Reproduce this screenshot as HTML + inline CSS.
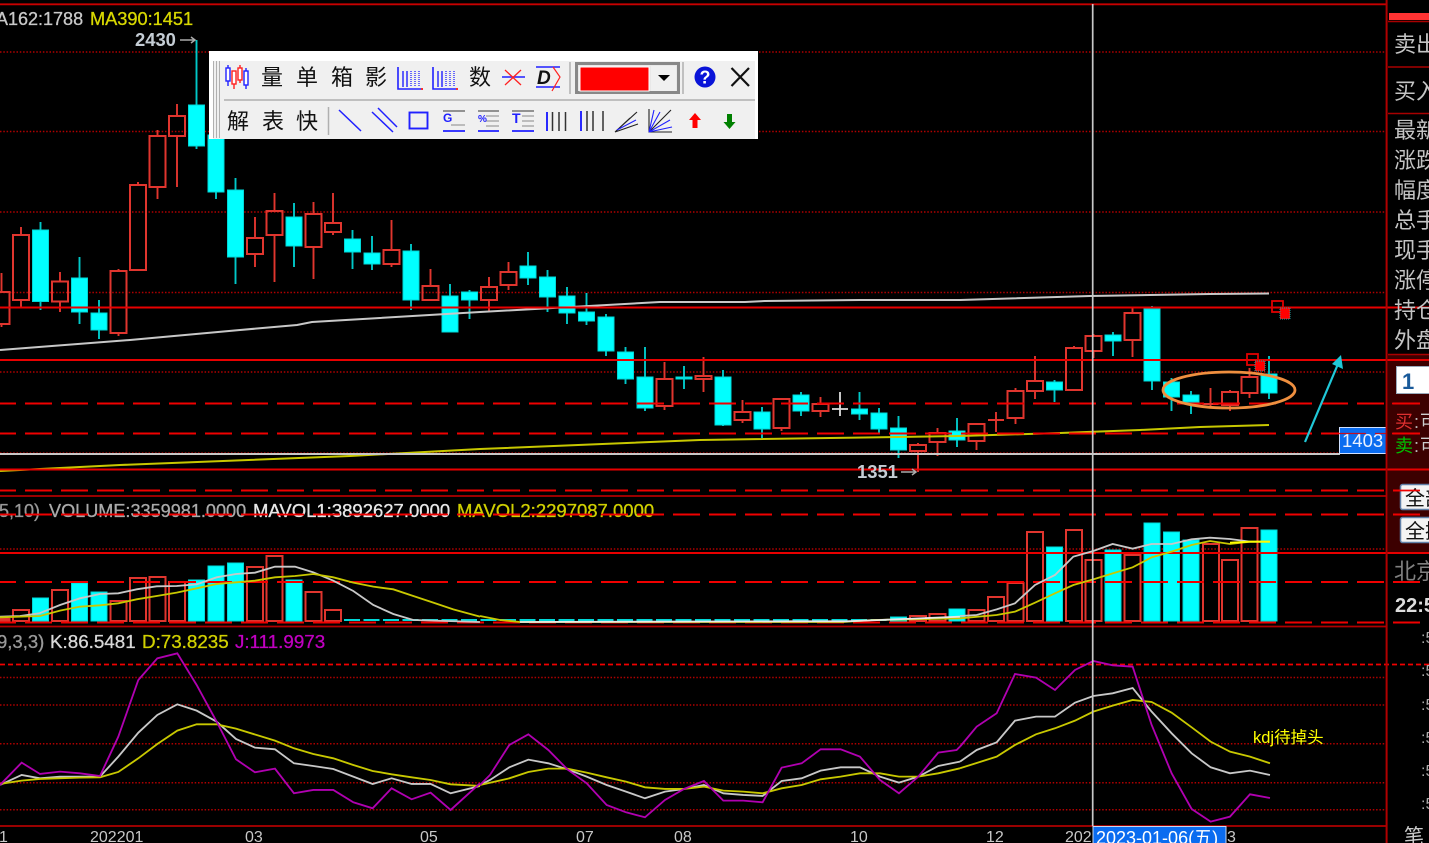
<!DOCTYPE html>
<html><head><meta charset="utf-8"><style>
html,body{margin:0;padding:0;background:#000;width:1429px;height:843px;overflow:hidden}
svg{display:block}
text{font-family:"Liberation Sans","WenQuanYi Zen Hei","Noto Sans CJK SC",sans-serif}
.c{font-family:"WenQuanYi Zen Hei","Noto Sans CJK SC",sans-serif}
.t{stroke-width:.3px;paint-order:stroke}
</style></head><body>
<svg width="1429" height="843" viewBox="0 0 1429 843" xmlns="http://www.w3.org/2000/svg">
<rect width="1429" height="843" fill="#000"/>
<rect x="1388" y="355" width="41" height="198" fill="#3c0000"/>

<!-- dotted grid -->
<g stroke="#b00000" stroke-width="1.500" stroke-dasharray="1.500 1.800" fill="none">
<path d="M0 52H1385M0 131.500H1385M0 212H1385M0 292.500H1385M0 372H1385M0 453H1385M0 549H1385M0 677.500H1385M0 705H1385M0 743.700H1385M0 782.700H1385M0 809.700H1385"/>
</g>

<!-- candle wicks -->
<path fill="none" stroke="#e0352e" stroke-width="1.900" d="M1.500 273V292M1.500 324V327M21 227V235M21 300V307M60 272V281.500M60 301.500V312M118.500 269V271M118.500 333V336M138 182V185M157.500 130V136M157.500 187V199M177 104V116M177 136V187M255 217V238M255 254V267M274.500 193V211M274.500 235V282M313.500 202V214M313.500 247V279M333 193V223M333 232V235M391.500 220V250M391.500 264V267M430.500 269V286M489 277V287M489 300V312M508.500 262V272M508.500 285V290M664.500 362V379M664.500 406V410M703.500 357V376M703.500 379V392M742.500 400V412M742.500 420V423M781.500 398V399M781.500 428V431M820.500 397V404M820.500 411V417M918 443V445M918 451V472M937.500 428V433M937.500 442V456M976.500 423V424M976.500 441V450M996 412V432M1015.500 388V391M1015.500 418V424M1035 356V381M1035 391V399M1074 346V348M1074 390V391M1093.500 334V336M1093.500 351V358M1132.500 308V313M1132.500 340V357M1210.500 388V408M1230 390V392M1230 405V411M1249.500 368V377M1249.500 393V398"/>
<path fill="none" stroke="#00c8c8" stroke-width="1.900" d="M40.500 222V310M79.500 257V324M99 300V339M196.500 40V149M216 130V199M235.500 178V284M294 203V267M352.500 230V269M372 236V270M411 244V310M450 284V332M469.500 290V319M528 252V285M547.500 270V312M567 287V324M586.500 293V325M606 314V356M625.500 347V384M645 347V411M684 366V389M723 370V426M762 407V438M801 392V416M859.500 392V420M879 408V433M898.500 416V458M957 418V447M1054.500 380V402M1113 332V356M1152 306V390M1171.500 378V411M1191 391V414M1269 356V399"/>
<!-- cyan bodies -->
<path fill="#00ffff" stroke="#00d8d8" stroke-width="1" d="M32.500 230h16v71.500h-16zM71.500 278h16v34h-16zM91 313h16v17h-16zM188.500 105h16v41h-16zM208 135h16v57h-16zM227.500 190h16v67h-16zM286 217h16v29h-16zM344.500 239h16v13h-16zM364 253h16v11h-16zM403 251h16v49h-16zM442 296h16v36h-16zM461.500 292h16v8h-16zM520 266h16v12h-16zM539.500 277h16v20h-16zM559 296h16v17h-16zM578.500 312h16v9h-16zM598 317h16v34h-16zM617.500 352h16v27h-16zM637 377h16v31h-16zM676 377h16v2h-16zM715 377h16v48h-16zM754 412h16v17h-16zM793 395h16v16h-16zM851.500 409h16v5h-16zM871 413h16v16h-16zM890.500 428h16v22h-16zM949 431h16v9h-16zM1046.500 382h16v8h-16zM1105 335h16v6h-16zM1144 309h16v72h-16zM1163.500 382h16v15h-16zM1183 395h16v7h-16zM1261 374h16v19h-16z"/>
<!-- red bodies -->
<path fill="none" stroke="#e0352e" stroke-width="2" d="M-6.500 292h16v32h-16zM13 235h16v65h-16zM52 281.500h16v20h-16zM110.500 271h16v62h-16zM130 185h16v85h-16zM149.500 136h16v51h-16zM169 116h16v20h-16zM247 238h16v16h-16zM266.500 211h16v24h-16zM305.500 214h16v33h-16zM325 223h16v9h-16zM383.500 250h16v14h-16zM422.500 286h16v14h-16zM481 287h16v13h-16zM500.500 272h16v13h-16zM656.500 379h16v27h-16zM695.500 376h16v3h-16zM734.500 412h16v8h-16zM773.500 399h16v29h-16zM812.500 404h16v7h-16zM910 445h16v6h-16zM929.500 433h16v9h-16zM968.500 424h16v17h-16zM1007.500 391h16v27h-16zM1027 381h16v10h-16zM1066 348h16v42h-16zM1085.500 336h16v15h-16zM1124.500 313h16v27h-16zM1222 392h16v13h-16zM1241.500 377h16v16h-16z"/>
<path fill="none" stroke="#e0352e" stroke-width="2" d="M988 420h16M1202.500 404h16"/>
<path fill="none" stroke="#00e0e0" stroke-width="2" d="M676 378h16"/>
<path fill="none" stroke="#ddd" stroke-width="1.800" d="M840 392V416M832 409H848"/>

<!-- volume bars -->
<path fill="#00ffff" stroke="#00d8d8" stroke-width="1" d="M32.500 598h16v23h-16zM71.500 583h16v38h-16zM91 592h16v29h-16zM188.500 580h16v41h-16zM208 566h16v55h-16zM227.500 563h16v58h-16zM286 580h16v41h-16zM890.500 617h16v4h-16zM949 609h16v12h-16zM1046.500 547h16v74h-16zM1105 550h16v71h-16zM1144 523h16v98h-16zM1163.500 532h16v89h-16zM1183 540h16v81h-16zM1261 530h16v91h-16z"/>
<path fill="none" stroke="#e0352e" stroke-width="2" d="M-6.500 619h16v2h-16zM13 610h16v11h-16zM52 590h16v31h-16zM110.500 601h16v20h-16zM130 578h16v43h-16zM149.500 577h16v44h-16zM169 582h16v39h-16zM247 567h16v54h-16zM266.500 556h16v65h-16zM305.500 592h16v29h-16zM325 610h16v11h-16zM910 616h16v5h-16zM929.500 614h16v7h-16zM968.500 610h16v11h-16zM988 597h16v24h-16zM1007.500 583h16v38h-16zM1027 532h16v89h-16zM1066 530h16v91h-16zM1085.500 560h16v61h-16zM1124.500 555h16v66h-16zM1203 544h16v77h-16zM1222 560h16v61h-16zM1241.500 528h16v93h-16z"/>
<path fill="none" stroke="#00d8d8" stroke-width="2" stroke-dasharray="16 3.500" d="M344 620H905"/>

<!-- price MAs -->
<polyline fill="none" stroke="#c8c8c8" stroke-width="2" points="0,350 130,340 240,330 297,325 312,322 480,312 660,302 745,302 765,301 860,300 960,300 1090,296 1210,294 1269,293.500"/>
<polyline fill="none" stroke="#c8c800" stroke-width="2" points="0,471 120,465 350,456 480,449 700,440 960,436 1060,433 1140,430 1200,427 1269,425"/>

<!-- red structural lines -->
<path fill="none" stroke="#c80000" stroke-width="1.900" d="M0 4.300H1386"/>
<path fill="none" stroke="#e80000" stroke-width="2" d="M0 307.500H1429M0 360H1429M0 469.500H1429M0 553H1429"/>
<path fill="none" stroke="#b00000" stroke-width="1.800" d="M0 496H1386M0 626.500H1386M0 826H1386"/>
<path fill="none" stroke="#f00000" stroke-width="2" stroke-dasharray="27 9" d="M-11 403.500H1420M-11 433.500H1420M-11 490.500H1420M-11 514.500H1420M-11 582H1420M-11 622.500H1420"/>
<path fill="none" stroke="#f00000" stroke-width="1.800" stroke-dasharray="5 3" d="M0 664.500H1429"/>
<path fill="none" stroke="#c8c8c8" stroke-width="2" d="M0 454H1340"/>

<!-- vol MA lines, zoom coordinates -->
<g transform="translate(0,490) scale(.3333)" fill="none" stroke-width="5.500">
<polyline stroke="#c8c8c8" points="0,380 60,378 118,370 180,345 240,325 300,312 355,310 410,298 470,289 530,288 590,283 650,262 708,252 765,248 825,230 885,230 940,247 1000,272 1060,303 1120,345 1180,372 1240,390 1440,396"/>
<polyline stroke="#c8c800" points="0,382 120,378 180,362 240,350 300,346 355,340 410,328 470,318 530,308 590,295 650,282 708,277 765,272 825,262 885,258 940,252 1000,262 1060,278 1120,290 1180,298 1240,318 1300,338 1360,358 1440,380"/>
</g>
<g transform="translate(480,490) scale(.3333)" fill="none" stroke-width="5.500">
<polyline stroke="#c8c800" points="0,378 60,390 120,396 1090,396 1180,390 1440,385"/>
<polyline stroke="#e8e8e8" points="120,396 940,394 1100,394 1200,390 1440,380"/>
</g>
<g transform="translate(960,490) scale(.3333)" fill="none" stroke-width="5.500">
<polyline stroke="#c8c8c8" points="0,378 50,375 110,358 165,340 225,285 285,255 340,200 400,183 458,162 518,176 575,162 635,162 695,148 750,143 810,147 870,155 930,155"/>
<polyline stroke="#c8c800" points="0,385 110,375 165,365 225,338 285,310 340,285 400,268 458,250 518,232 575,202 635,185 695,165 750,153 810,162 870,155 930,155"/>
<polyline stroke="#ffff00" points="810,158 870,155 930,155"/>
</g>

<!-- KDJ lines -->
<g transform="translate(0,490) scale(.3333)" fill="none" stroke-width="5.500">
<polyline stroke="#c8c8c8" points="0,885 65,855 120,865 180,860 240,860 300,860 355,800 415,728 472,675 532,643 590,662 650,695 708,747 765,773 825,778 882,820 940,828 1000,837 1060,860 1118,882 1175,865 1235,882 1292,882 1352,910 1440,888"/>
<polyline stroke="#c8c800" points="0,882 65,872 120,867 240,863 300,862 355,846 415,805 472,762 532,722 590,703 650,703 708,716 825,752 882,775 940,792 1000,805 1060,825 1118,843 1175,853 1235,862 1292,870 1352,883 1440,888"/>
<polyline stroke="#b000b0" points="0,885 65,818 120,852 180,845 240,850 300,858 355,740 415,570 472,505 532,490 590,585 650,695 708,808 765,847 825,836 882,910 940,900 1000,900 1060,937 1118,955 1175,895 1235,928 1292,908 1352,960 1440,880"/>
</g>
<g transform="translate(480,490) scale(.3333)" fill="none" stroke-width="5.500">
<polyline stroke="#c8c8c8" points="0,885 30,870 88,832 145,809 205,820 262,838 320,860 380,885 438,905 495,925 555,905 612,897 672,885 730,910 790,915 848,918 905,873 965,865 1022,842 1082,832 1140,832 1200,860 1257,878 1315,860 1375,828 1440,815"/>
<polyline stroke="#c8c800" points="0,885 88,865 145,846 205,836 262,836 320,848 380,862 438,875 495,892 555,897 612,897 672,890 730,902 790,905 848,910 905,895 965,885 1022,868 1082,860 1140,850 1200,850 1257,860 1315,860 1375,850 1440,835"/>
<polyline stroke="#b000b0" points="0,885 30,855 88,765 145,733 205,780 262,838 320,880 380,945 438,967 495,982 555,930 612,897 672,873 730,932 790,932 848,937 905,833 965,820 1022,778 1082,778 1140,800 1200,870 1257,910 1315,860 1375,788 1430,780 1440,770"/>
</g>
<g transform="translate(960,490) scale(.3333)" fill="none" stroke-width="5.500">
<polyline stroke="#c8c8c8" points="0,815 50,780 110,757 165,692 228,680 285,680 345,638 400,618 458,610 518,594 575,665 635,730 695,790 752,832 810,850 870,842 930,855"/>
<polyline stroke="#c8c800" points="0,835 110,800 165,765 228,733 285,715 345,692 400,665 458,647 518,630 575,636 635,668 695,712 752,755 810,785 870,800 930,820"/>
<polyline stroke="#b000b0" points="0,770 50,710 110,670 165,552 228,563 285,600 345,540 400,513 458,526 518,530 575,705 635,850 695,957 752,995 810,980 870,913 930,924"/>
</g>

<!-- annotations -->
<ellipse cx="1229" cy="390" rx="66" ry="18" fill="none" stroke="#ef8f3f" stroke-width="2.800"/>
<path d="M1305 442L1338 364" stroke="#20c8d8" stroke-width="2.200" fill="none"/>
<path d="M1341 355L1343 369L1332 364Z" fill="#20c8d8"/>
<g fill="none" stroke="#e00000" stroke-width="1.800"><rect x="1272" y="301" width="11" height="11"/><rect x="1247" y="354" width="11" height="11"/></g>
<g fill="#ff0000" stroke="#20a0a0" stroke-width="1" stroke-dasharray="1 1"><rect x="1280" y="308" width="10" height="11"/><rect x="1255" y="361" width="10" height="10"/></g>

<!-- crosshair -->
<path d="M1092.700 4V826" stroke="#c8c8c8" stroke-width="1.700"/>

<!-- text labels -->
<text class="t" x="-4" y="25" font-size="18" fill="#c8c8c8" stroke="#c8c8c8">A162:1788</text>
<text class="t" x="90" y="25" font-size="18.200" fill="#d8d800" stroke="#d8d800">MA390:1451</text>
<text x="135" y="46" font-size="18.400" font-weight="bold" fill="#c4ccd4">2430</text>
<path d="M180 40H195M191 37L195 40L191 43" stroke="#aaa" stroke-width="1.500" fill="none"/>
<text x="857" y="478" font-size="18.400" font-weight="bold" fill="#c4ccd4">1351</text>
<path d="M901 472H916M912 469L916 472L912 475" stroke="#aaa" stroke-width="1.500" fill="none"/>
<text class="t" x="-1" y="517" font-size="18" fill="#999" stroke="#999">5,10)</text>
<text class="t" x="49" y="517" font-size="18.100" fill="#aaa" stroke="#aaa">VOLUME:3359981.0000</text>
<text class="t" x="253" y="517" font-size="18.500" fill="#e8e8e8" stroke="#e8e8e8">MAVOL1:3892627.0000</text>
<text class="t" x="457" y="517" font-size="18.500" fill="#d0d000" stroke="#d0d000">MAVOL2:2297087.0000</text>
<path fill="none" stroke="#f00000" stroke-width="1.800" stroke-dasharray="27 9" d="M-11 514.500H670"/>
<text class="t" x="-3" y="648" font-size="18.500" fill="#999" stroke="#999">9,3,3)</text>
<text class="t" x="50" y="648" font-size="18.800" fill="#d8d8d8" stroke="#d8d8d8">K:86.5481</text>
<text class="t" x="142" y="648" font-size="18.800" fill="#d0d000" stroke="#d0d000">D:73.8235</text>
<text class="t" x="235" y="648" font-size="18.800" fill="#c000c0" stroke="#c000c0">J:111.9973</text>
<text x="1253" y="743" font-size="16.500" fill="#ffff00">kdj待掉头</text>

<g font-size="16" fill="#c8c8c8">
<text x="-1" y="842">1</text><text x="90" y="842">202201</text><text x="245" y="842">03</text><text x="420" y="842">05</text><text x="576" y="842">07</text><text x="674" y="842">08</text><text x="850" y="842">10</text><text x="986" y="842">12</text><text x="1065" y="842">202</text><text x="1227" y="842">3</text>
</g>
<rect x="1093" y="826.500" width="133" height="20" fill="#0a6cf0" stroke="#c8d8f0" stroke-width="1"/>
<text x="1096" y="844" font-size="18" fill="#fff">2023-01-06(五)</text>

<rect x="1339.500" y="427.500" width="47" height="26" fill="#0a6cf0" stroke="#d0e0ff" stroke-width="1"/>
<text x="1342" y="447" font-size="18.500" fill="#e8f0ff">1403</text>
<path d="M1339 433.500H1386" stroke="#e00000" stroke-width="1.300" stroke-dasharray="27 9" opacity=".85"/>

<!-- right panel -->
<path d="M1386.600 0V843" stroke="#b00000" stroke-width="2"/>
<rect x="1389" y="13" width="40" height="7" fill="#ff3333"/>
<path d="M1388 21.500H1429M1388 67H1429M1388 113.500H1429M1388 354.500H1429" stroke="#a80000" stroke-width="1.500"/>
<g class="c" font-size="22" fill="#c4c4c4">
<text class="c" x="1394" y="52">卖出</text><text class="c" x="1394" y="99">买入</text>
<text class="c" x="1394" y="138">最新</text><text class="c" x="1394" y="168">涨跌</text><text class="c" x="1394" y="198">幅度</text><text class="c" x="1394" y="228">总手</text><text class="c" x="1394" y="258">现手</text><text class="c" x="1394" y="288">涨停</text><text class="c" x="1394" y="318">持仓</text><text class="c" x="1394" y="348">外盘</text>
</g>
<rect x="1396.500" y="366.500" width="40" height="27" fill="#fff" stroke="#9ab" stroke-width="1"/>
<text x="1402" y="389" font-size="22" font-weight="bold" fill="#1a5a9a" style="font-family:'Liberation Sans',sans-serif">1</text>
<text class="c" x="1395" y="428" font-size="18" fill="#e03030">买</text>
<text x="1414" y="428" font-size="18" fill="#bbb">:</text><text class="c" x="1420" y="428" font-size="18" fill="#ccc">可</text>
<text class="c" x="1395" y="452" font-size="18" fill="#00c000">卖</text>
<text x="1414" y="452" font-size="18" fill="#bbb">:</text><text class="c" x="1420" y="452" font-size="18" fill="#ccc">可</text>
<path d="M1392 403.500H1420M1392 433.500H1420" stroke="#f00000" stroke-width="1.800"/>
<rect x="1400.500" y="484.500" width="40" height="25" rx="2" fill="#f4f4f4" stroke="#6080a8" stroke-width="1.500"/>
<rect x="1400.500" y="517.500" width="40" height="25" rx="2" fill="#f4f4f4" stroke="#6080a8" stroke-width="1.500"/>
<text class="c" x="1405" y="505" font-size="20" fill="#111">全部</text>
<text class="c" x="1405" y="538" font-size="20" fill="#111">全撤</text>
<path d="M1393 490.500H1420" stroke="#f00000" stroke-width="1.800"/>
<text class="c" x="1394" y="579" font-size="22" fill="#808080">北京</text>
<path d="M1393 582H1420M1393 622.500H1420" stroke="#f00000" stroke-width="1.800"/>
<text x="1395" y="612" font-size="20" font-weight="bold" fill="#ddd">22:5</text>
<g font-size="16" fill="#aaa">
<text x="1421" y="643">:5</text><text x="1421" y="676">:5</text><text x="1421" y="710">:5</text><text x="1421" y="743">:5</text><text x="1421" y="776">:5</text><text x="1421" y="809">:5</text>
</g>
<text class="c" x="1404" y="843" font-size="20" fill="#ccc">笔</text>

<!-- toolbar -->
<rect x="209" y="51" width="549" height="88" fill="#ffffff"/>
<rect x="222" y="61" width="533" height="78" fill="#f0f0f0"/>
<rect x="213" y="61" width="9" height="78" fill="#f0f0f0"/>
<path d="M213.500 61V138M216.500 61V138M219.500 61V138" stroke="#b0b0b0" stroke-width="1"/>
<path d="M224 100H755" stroke="#b8b8b8" stroke-width="1.700"/>
<path d="M328.500 107V135M570 62V94M683 62V94" stroke="#b0b0b0" stroke-width="1.500"/>
<!-- candle icon -->
<g stroke-width="1.400" fill="none">
<path d="M228 65V86M246 68V89" stroke="#2020ff"/><path d="M234 71V89M240 65V83" stroke="#ff2020"/>
<rect x="226" y="68" width="4" height="13" fill="#fff" stroke="#2020ff"/><rect x="244" y="71" width="4" height="14" fill="#fff" stroke="#2020ff"/>
<rect x="232" y="71" width="4" height="13" fill="#fff" stroke="#ff2020"/><rect x="238" y="68" width="4" height="12" fill="#fff" stroke="#ff2020"/>
</g>
<g class="c" font-size="22" fill="#111" text-anchor="middle">
<text class="c" x="272" y="85">量</text><text class="c" x="307" y="85">单</text><text class="c" x="342" y="85">箱</text><text class="c" x="376" y="85">影</text><text class="c" x="480" y="85">数</text>
<text class="c" x="238" y="129">解</text><text class="c" x="273" y="129">表</text><text class="c" x="307" y="129">快</text>
</g>
<!-- bar icons -->
<g fill="none">
<path d="M398 67V89H421" stroke="#2020ff" stroke-width="1.600"/><path d="M421 89H423" stroke="#f00" stroke-width="1.600"/>
<path d="M403 71V87M407 71V87" stroke="#2020ff" stroke-width="1.400"/><path d="M411 71V87M415 71V87M419 71V87" stroke="#2020ff" stroke-width="1.300" stroke-dasharray="1 1"/>
<path d="M433 67V89H456" stroke="#2020ff" stroke-width="1.600"/><path d="M456 89H458" stroke="#f00" stroke-width="1.600"/>
<path d="M438 71V87M442 71V87" stroke="#2020ff" stroke-width="1.400"/><path d="M446 71V87M450 71V87M454 71V87" stroke="#2020ff" stroke-width="1.300" stroke-dasharray="1 1"/>
<path d="M502 77H525" stroke="#2020ff" stroke-width="1.600"/><path d="M505 70L521 85M521 70L505 85" stroke="#ff2020" stroke-width="1.300"/>
<path d="M536 67H560M536 87H560" stroke="#2020ff" stroke-width="1.500"/>
<path d="M553 67L560 77L552 91" stroke="#ff2020" stroke-width="1.200"/>
</g>
<text x="537" y="84" font-size="19" font-weight="bold" font-style="italic" fill="#111">D</text>
<!-- color box -->
<rect x="576.500" y="63.500" width="102" height="29" fill="#e8e8e8" stroke="#888" stroke-width="3"/>
<rect x="580" y="67" width="69" height="24" fill="#ff0000" stroke="#fff" stroke-width="1"/>
<rect x="651" y="66" width="25" height="25" fill="#f0f0f0"/>
<path d="M658 75H670L664 81Z" fill="#000"/>
<!-- help, close -->
<circle cx="705" cy="77" r="10.500" fill="#0a14d8"/>
<text x="705" y="83.500" font-size="18" font-weight="bold" text-anchor="middle" fill="#fff">?</text>
<path d="M731.500 68L749 86M749 68L731.500 86" stroke="#111" stroke-width="2.200" fill="none"/>
<!-- row 2 icons -->
<g fill="none" stroke="#2020ff" stroke-width="1.500">
<path d="M339 110L361 131"/>
<path d="M372 112L393 132M378 108L397 127"/>
<rect x="409.500" y="112.500" width="18" height="16" stroke-width="1.900"/>
<path d="M443 131H465M478 131H499M512 131H534" stroke-width="1.700"/>
<path d="M443 111H465M478 111H499M512 111H534" stroke="#333" stroke-width="1.100"/>
<path d="M451 125H465M486 116H499M486 121H499M486 126H499M522 116H534M522 121H534M522 126H534" stroke="#888" stroke-width="1.100"/>
<path d="M547 112V131M581 111V131" stroke-width="1.900"/>
<path d="M552.500 112V131M559 112V131M565.500 112V131M587 111V131M593 111V131M603 111V131" stroke="#333" stroke-width="1.500"/>
<path d="M615 132L637 112M615 132L638 124M615 132L630 118" stroke="#222" stroke-width="1.100"/>
<path d="M617 130L636 120" stroke="#2020ff" stroke-width="1.100"/>
<path d="M649 109V132H672M649 132L671 110" stroke="#222" stroke-width="1.100"/>
<path d="M649 132L654 110M649 132L660 112M649 132L670 120M649 132L672 127" stroke="#2020ff" stroke-width="1.100"/>
</g>
<text x="443" y="122" font-size="12" font-weight="bold" fill="#2020ff">G</text>
<text x="478" y="122" font-size="10" font-weight="bold" fill="#2020ff">%</text>
<text x="512" y="123" font-size="14" font-weight="bold" fill="#2020ff">T</text>
<path d="M695 113L701 120H697.500V128H692.500V120H689Z" fill="#ff0000"/>
<path d="M729.500 129L723.500 122H727V114H732V122H735.500Z" fill="#008000"/>
</svg>
</body></html>
